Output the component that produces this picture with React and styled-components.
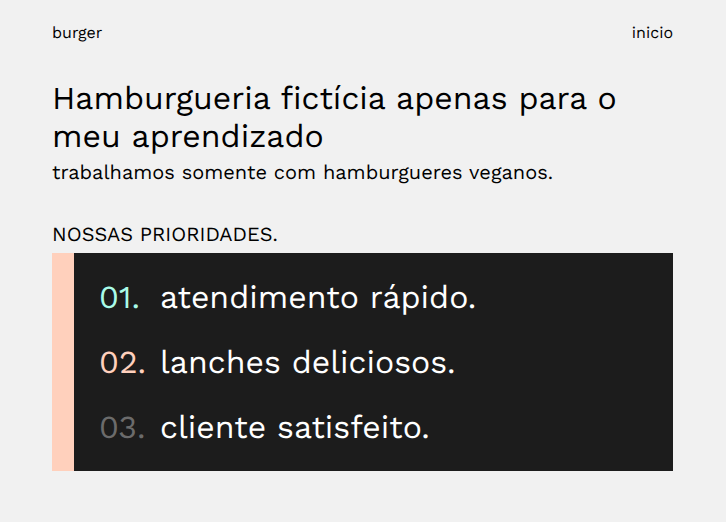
import React from "react";
import styled, { createGlobalStyle } from "styled-components";

const GlobalStyle = createGlobalStyle`
  *, *::before, *::after { box-sizing: border-box; }
  body {
    margin: 0;
    background: #f1f1f1;
    color: #000000;
    font-family: "Work Sans", Inter, "Open Sans", sans-serif;
    text-rendering: geometricPrecision;
  }
`;

const Page = styled.div`
  padding: 24px 53px 51px 52px;
`;

const Nav = styled.nav`
  display: flex;
  justify-content: space-between;
  margin-bottom: 37px;
`;

const NavLink = styled.a`
  color: inherit;
  font-size: 16px;
  line-height: 18px;
  text-decoration: none;
`;

const Title = styled.h1`
  margin: 0;
  font-size: 32px;
  font-weight: 400;
  line-height: 38px;
`;

const Subtitle = styled.p`
  margin: 5px 0 0;
  font-size: 20px;
  line-height: 24px;
`;

const SectionTitle = styled.h2`
  margin: 38px 0 7px;
  font-size: 20px;
  font-weight: 400;
  line-height: 24px;
`;

const Priorities = styled.ol`
  display: grid;
  gap: 28px;
  margin: 0;
  padding: 26px 25px 25px;
  border-left: 22px solid #ffd0bc;
  background: #1c1c1c;
  color: #ffffff;
  font-size: 32px;
  line-height: 37px;
  list-style: none;
`;

const Priority = styled.li`
  display: grid;
  grid-template-columns: 61px 1fr;
`;

const Number = styled.span`
  color: ${({ $color }) => $color};
`;

const items = [
  { number: "01.", text: "atendimento rápido.", color: "#a9fbe8" },
  { number: "02.", text: "lanches deliciosos.", color: "#ffd0bc" },
  { number: "03.", text: "cliente satisfeito.", color: "#6b6b6b" },
];

export default function App() {
  return (
    <>
      <GlobalStyle />
      <Page>
        <Nav>
          <NavLink href="#burger">burger</NavLink>
          <NavLink href="#inicio">inicio</NavLink>
        </Nav>
        <main>
          <Title>Hamburgueria fictícia apenas para o meu aprendizado</Title>
          <Subtitle>trabalhamos somente com hamburgueres veganos.</Subtitle>
          <SectionTitle>NOSSAS PRIORIDADES.</SectionTitle>
          <Priorities>
            {items.map(({ number, text, color }) => (
              <Priority key={number}>
                <Number $color={color}>{number}</Number>
                <span>{text}</span>
              </Priority>
            ))}
          </Priorities>
        </main>
      </Page>
    </>
  );
}
